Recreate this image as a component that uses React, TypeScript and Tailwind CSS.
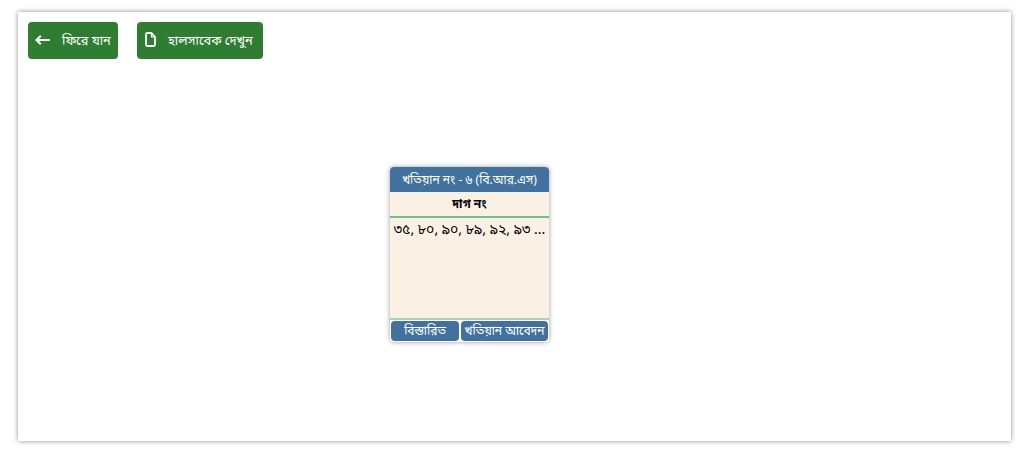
const bangla = "font-['Noto_Sans','Noto_Sans_Bengali','Lato',sans-serif]";

function GreenButton({ icon, label, className }: { icon: React.ReactNode; label: string; className: string }) {
  return (
    <button className={`flex h-[37px] items-center rounded bg-[#2e7d32] text-[12.8px] text-white ${className}`}>
      {icon}
      <span className="whitespace-nowrap">{label}</span>
    </button>
  );
}

export default function App() {
  return (
    <div className={`h-[453px] w-[1024px] overflow-hidden bg-white pl-[18px] pt-[12px] ${bangla}`}>
      <div className="h-[429px] w-[993px] bg-white p-[10px] shadow-[0_0_5px_rgba(0,0,0,0.45)]">
        <div className="flex gap-[19px]">
          <GreenButton
            className="w-[90px] pl-[7px]"
            label="ফিরে যান"
            icon={
              <svg width="15" height="12" viewBox="0 0 15 12" className="mb-[2px] mr-[12px]" fill="none" stroke="currentColor" strokeWidth="2.2">
                <path d="M1.500 6H15M5.800 1.800L1.500 6L5.800 10.200" />
              </svg>
            }
          />
          <GreenButton
            className="w-[126px] pl-[8px]"
            label="হালসাবেক দেখুন"
            icon={
              <svg width="11" height="15" viewBox="0 0 11 15" className="mb-[2px] mr-[12px]" fill="none" stroke="currentColor" strokeWidth="1.8" strokeLinejoin="round">
                <path d="M1 2.200C1 1.500 1.500 1 2.200 1H6.500L10 4.800V12.800C10 13.500 9.500 14 8.800 14H2.200C1.500 14 1 13.500 1 12.800Z" />
                <path d="M6.500 1V4.800H10" strokeWidth="1.200" />
              </svg>
            }
          />
        </div>

        <div className="ml-[362px] mt-[108px] flex h-[175px] w-[159px] flex-col overflow-hidden rounded bg-[#fbf0e4] text-center shadow-[0_0_5px_rgba(0,0,0,0.4)]">
          <div className="flex h-[25px] items-center justify-center bg-[#41729f] text-[12px] text-white">
            খতিয়ান নং - ৬ (বি.আর.এস)
          </div>
          <div className="flex h-[24px] items-center justify-center text-[12px] font-bold text-black">
            দাগ নং
          </div>
          <div className="h-[2px] bg-[#6cc088]" />
          <div className="flex-1 whitespace-nowrap text-[14px] text-black">
            ৩৫, ৮০, ৯০, ৮৯, ৯২, ৯৩ ...
          </div>
          <div className="flex h-[24px] gap-[2px] border-t-2 border-t-[#a9d3b5] bg-white px-[1px] pb-[1px] pt-[1px] text-[12px] text-white">
            <div className="flex w-[68px] items-center justify-center rounded-sm bg-[#41729f]">বিস্তারিত</div>
            <div className="flex flex-1 items-center justify-center rounded-sm bg-[#41729f]">খতিয়ান আবেদন</div>
          </div>
        </div>
      </div>
    </div>
  );
}
